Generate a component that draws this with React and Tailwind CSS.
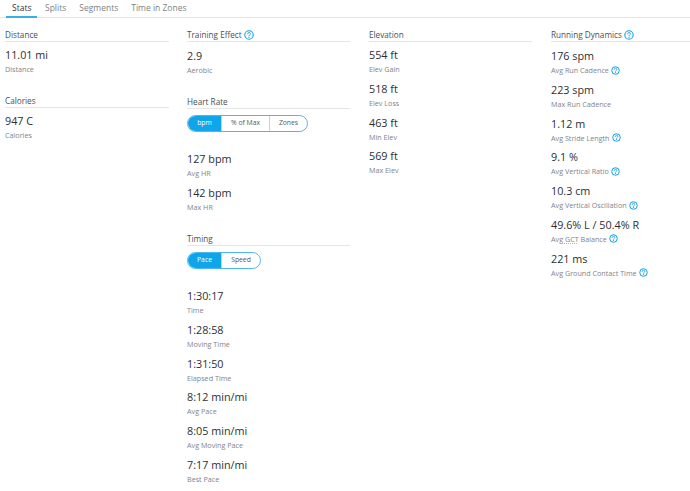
const Help = ({ size = 9 }) => (
  <svg width={size} height={size} viewBox="0 0 20 20" fill="none" className="inline-block shrink-0">
    <circle cx="10" cy="10" r="8.4" stroke="#0f9fe6" strokeWidth="2.2" />
    <path d="M7.2 7.8c0-1.7 1.2-2.7 2.9-2.7 1.6 0 2.8 1 2.8 2.4 0 2.2-2.9 2.2-2.9 4.4" stroke="#0f9fe6" strokeWidth="1.9" strokeLinecap="round" />
    <circle cx="10" cy="14.6" r="1.2" fill="#0f9fe6" />
  </svg>
);

const Heading = ({ children, help }) => (
  <div className="flex h-[13px] items-center gap-[2px] border-b border-[#e3e5e7] pb-[1px] text-[8.2px] leading-[12px] text-[#4a4f54]">
    <span>{children}</span>
    {help && <Help size={10} />}
  </div>
);

const Stat = ({ value, label, help, abbr }) => (
  <div className="h-[33.8px]">
    <div className="h-[16px] text-[10.8px] leading-[16px] text-[#2c3034]">{value}</div>
    <div className="flex h-[12px] items-center gap-[2.5px] text-[7.2px] leading-[12px] text-[#7f8489]">
      <span>
        {abbr ? (
          <>
            Avg <span className="underline decoration-dotted decoration-[#b5b8bb]">{abbr}</span> Balance
          </>
        ) : (
          label
        )}
      </span>
      {help && <Help />}
    </div>
  </div>
);

const Toggle = ({ items }) => (
  <div className="flex h-[17px] w-fit overflow-hidden rounded-full border border-[#4db8ef] text-[6.8px] font-medium text-[#555a5f]">
    {items.map((item, i) => (
      <div
        key={item.label}
        className={
          i === 0
            ? "flex items-center justify-center bg-[#0ea5ea] text-white"
            : "flex items-center justify-center border-l border-[#a6dcf7]"
        }
        style={{ width: item.w }}
      >
        {item.label}
      </div>
    ))}
  </div>
);

const tabs = ["Stats", "Splits", "Segments", "Time in Zones"];

export default function App() {
  return (
    <div className="h-[491px] w-[690px] overflow-hidden bg-white font-['Open_Sans',sans-serif]">
      {/* Tabs */}
      <div className="flex h-[18px] gap-[13px] border-b border-[#e3e5e7] pl-[6px] pt-[1px] text-[8.5px] leading-[13px] text-[#7d8287]">
        {tabs.map((t, i) => (
          <div
            key={t}
            className={
              i === 0
                ? "mr-[-5px] h-[17px] w-[31px] border-b-2 border-[#35aeea] pl-[6px] text-[#33383d]"
                : "h-[17px]"
            }
          >
            {t}
          </div>
        ))}
      </div>

      <div className="flex pl-[5px] pt-[11px]">
        {/* Column 1 */}
        <div className="mr-[18px] w-[164px]">
          <Heading>Distance</Heading>
          <div className="mt-[5px] h-[48px]">
            <Stat value="11.01 mi" label="Distance" />
          </div>
          <Heading>Calories</Heading>
          <div className="mt-[5px]">
            <Stat value="947 C" label="Calories" />
          </div>
        </div>

        {/* Column 2 */}
        <div className="mr-[19px] w-[163px]">
          <Heading help>Training Effect</Heading>
          <div className="mt-[6px] h-[48px]">
            <Stat value="2.9" label="Aerobic" />
          </div>
          <Heading>Heart Rate</Heading>
          <div className="mt-[6px]">
            <Toggle
              items={[
                { label: "bpm", w: 33 },
                { label: "% of Max", w: 48 },
                { label: "Zones", w: 38 },
              ]}
            />
          </div>
          <div className="mt-[19px] h-[82px]">
            <Stat value="127 bpm" label="Avg HR" />
            <Stat value="142 bpm" label="Max HR" />
          </div>
          <Heading>Timing</Heading>
          <div className="mt-[6px]">
            <Toggle
              items={[
                { label: "Pace", w: 33 },
                { label: "Speed", w: 39 },
              ]}
            />
          </div>
          <div className="mt-[19px]">
            <Stat value="1:30:17" label="Time" />
            <Stat value="1:28:58" label="Moving Time" />
            <Stat value="1:31:50" label="Elapsed Time" />
            <Stat value="8:12 min/mi" label="Avg Pace" />
            <Stat value="8:05 min/mi" label="Avg Moving Pace" />
            <Stat value="7:17 min/mi" label="Best Pace" />
          </div>
        </div>

        {/* Column 3 */}
        <div className="mr-[19px] w-[163px]">
          <Heading>Elevation</Heading>
          <div className="mt-[5px]">
            <Stat value="554 ft" label="Elev Gain" />
            <Stat value="518 ft" label="Elev Loss" />
            <Stat value="463 ft" label="Min Elev" />
            <Stat value="569 ft" label="Max Elev" />
          </div>
        </div>

        {/* Column 4 */}
        <div className="flex-1">
          <Heading help>Running Dynamics</Heading>
          <div className="mt-[6px]">
            <Stat value="176 spm" label="Avg Run Cadence" help />
            <Stat value="223 spm" label="Max Run Cadence" />
            <Stat value="1.12 m" label="Avg Stride Length" help />
            <Stat value="9.1 %" label="Avg Vertical Ratio" help />
            <Stat value="10.3 cm" label="Avg Vertical Oscillation" help />
            <Stat value="49.6% L / 50.4% R" abbr="GCT" help />
            <Stat value="221 ms" label="Avg Ground Contact Time" help />
          </div>
        </div>
      </div>
    </div>
  );
}
